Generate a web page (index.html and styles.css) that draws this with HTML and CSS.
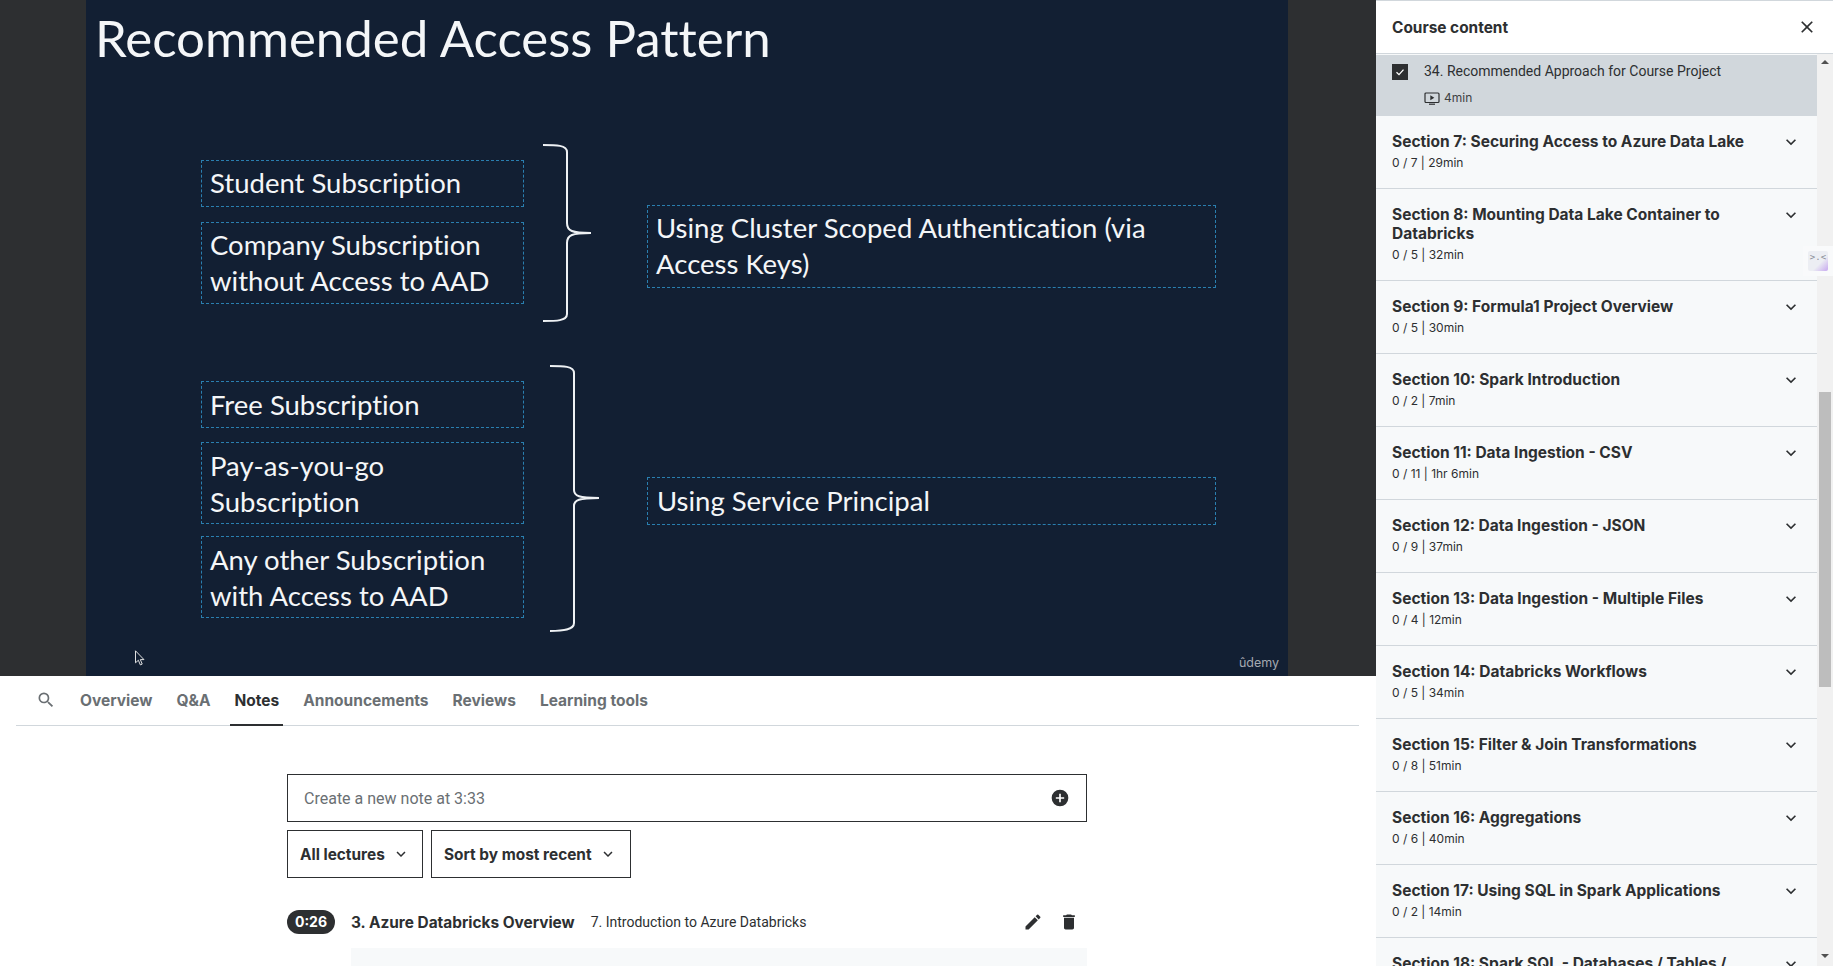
FILE: index.html
```html
<!DOCTYPE html>
<html lang="en">
<head>
  <meta charset="UTF-8" />
  <title>Course player</title>
  <link rel="stylesheet" href="styles.css">
</head>
<body>

<div class="app">
  <div class="main">
    <div class="stage">
      <div class="slide">
        <h1 class="slide-title">Recommended Access Pattern</h1>

        <div class="box box-student">Student Subscription</div>
        <div class="box box-company">Company Subscription<br>without Access to AAD</div>
        <div class="box box-free">Free Subscription</div>
        <div class="box box-payg">Pay-as-you-go<br>Subscription</div>
        <div class="box box-other">Any other Subscription<br>with Access to AAD</div>
        <div class="box box-cluster">Using Cluster Scoped Authentication (via<br>Access Keys)</div>
        <div class="box box-principal">Using Service Principal</div>

        <svg class="brace brace-top" width="52" height="180" viewBox="0 0 52 180">
          <path d="M1 2C14 2 25 2 25 9V80C25 88 30 90 49 90C30 90 25 92 25 100V171C25 178 14 178 1 178" />
        </svg>
        <svg class="brace brace-bottom" width="52" height="270" viewBox="0 0 52 270">
          <path d="M1 2C14 2 25 2 25 9V126C25 132 30 134 50 134C30 134 25 136 25 142V259C25 266 14 267 1 267" />
        </svg>

        <span class="watermark">ûdemy</span>
      </div>
      <svg class="cursor" width="11" height="16" viewBox="0 0 12 20">
        <path d="M1 1V16L4.6 12.8L7 18.6L9.4 17.6L7 12H11.6Z" />
      </svg>
    </div>

    <nav class="tabs">
      <span class="tab tab-search">
        <svg width="20" height="20" viewBox="0 0 24 24"><path d="M15.5 14h-.79l-.28-.27A6.47 6.47 0 0 0 16 9.5 6.5 6.5 0 1 0 9.5 16c1.61 0 3.09-.59 4.23-1.57l.27.28v.79l5 4.99L20.49 19l-4.99-5zm-6 0C7.01 14 5 11.99 5 9.5S7.01 5 9.5 5 14 7.01 14 9.5 11.99 14 9.5 14z"/></svg>
      </span>
      <span class="tab">Overview</span>
      <span class="tab">Q&amp;A</span>
      <span class="tab active">Notes</span>
      <span class="tab">Announcements</span>
      <span class="tab">Reviews</span>
      <span class="tab">Learning tools</span>
    </nav>

    <div class="notes">
      <div class="note-input">
        <span>Create a new note at 3:33</span>
        <svg width="20" height="20" viewBox="0 0 24 24"><path d="M12 2a10 10 0 1 0 0 20 10 10 0 0 0 0-20zm5 11h-4v4h-2v-4H7v-2h4V7h2v4h4v2z"/></svg>
      </div>

      <div class="filters">
        <button class="filter filter-lectures">All lectures
          <svg width="18" height="18" viewBox="0 0 24 24"><path d="M7.4 8.6 12 13.2l4.6-4.6L18 10l-6 6-6-6z"/></svg>
        </button>
        <button class="filter filter-sort">Sort by most recent
          <svg width="18" height="18" viewBox="0 0 24 24"><path d="M7.4 8.6 12 13.2l4.6-4.6L18 10l-6 6-6-6z"/></svg>
        </button>
      </div>

      <div class="note-head">
        <span class="pill">0:26</span>
        <span class="note-section">3. Azure Databricks Overview</span>
        <span class="note-lecture">7. Introduction to Azure Databricks</span>
        <span class="note-actions">
          <svg width="20" height="20" viewBox="0 0 24 24"><path d="M3 17.25V21h3.75L17.81 9.94l-3.75-3.75L3 17.25zM20.71 7.04a1 1 0 0 0 0-1.41l-2.34-2.34a1 1 0 0 0-1.41 0l-1.83 1.83 3.75 3.75 1.83-1.83z"/></svg>
          <svg width="20" height="20" viewBox="0 0 24 24"><path d="M6 19c0 1.1.9 2 2 2h8c1.1 0 2-.9 2-2V7H6v12zM19 4h-3.5l-1-1h-5l-1 1H5v2h14V4z"/></svg>
        </span>
      </div>
      <div class="note-body"></div>
    </div>
  </div>

  <aside class="sidebar">
    <header class="side-head">
      <span>Course content</span>
      <svg width="20" height="20" viewBox="0 0 24 24"><path d="M19 6.41 17.59 5 12 10.59 6.41 5 5 6.41 10.59 12 5 17.59 6.41 19 12 13.41 17.59 19 19 17.59 13.41 12z"/></svg>
    </header>

    <div class="side-scroll">
      <div class="side-list">
        <div class="lecture">
          <span class="check">
            <svg width="12" height="12" viewBox="0 0 12 12"><path d="M2.5 6.2 5 8.6 9.5 3.6" /></svg>
          </span>
          <div>
            <div class="lecture-title">34. Recommended Approach for Course Project</div>
            <div class="lecture-meta">
              <svg width="16" height="13" viewBox="0 0 16 13"><rect x="1" y="1" width="14" height="9.5" rx="1" /><path class="play" d="M6.3 3.2 10.3 5.7 6.3 8.2Z" /><path d="M5 12.2H11" /></svg>
              4min
            </div>
          </div>
        </div>

        <div class="section"><div class="section-text"><h3>Section 7: Securing Access to Azure Data Lake</h3><p>0 / 7 | 29min</p></div><svg class="chev" viewBox="0 0 24 24"><path d="M7.4 8.6 12 13.2l4.6-4.6L18 10l-6 6-6-6z"/></svg></div>
        <div class="section"><div class="section-text"><h3>Section 8: Mounting Data Lake Container to Databricks</h3><p>0 / 5 | 32min</p></div><svg class="chev" viewBox="0 0 24 24"><path d="M7.4 8.6 12 13.2l4.6-4.6L18 10l-6 6-6-6z"/></svg></div>
        <div class="section"><div class="section-text"><h3>Section 9: Formula1 Project Overview</h3><p>0 / 5 | 30min</p></div><svg class="chev" viewBox="0 0 24 24"><path d="M7.4 8.6 12 13.2l4.6-4.6L18 10l-6 6-6-6z"/></svg></div>
        <div class="section"><div class="section-text"><h3>Section 10: Spark Introduction</h3><p>0 / 2 | 7min</p></div><svg class="chev" viewBox="0 0 24 24"><path d="M7.4 8.6 12 13.2l4.6-4.6L18 10l-6 6-6-6z"/></svg></div>
        <div class="section"><div class="section-text"><h3>Section 11: Data Ingestion - CSV</h3><p>0 / 11 | 1hr 6min</p></div><svg class="chev" viewBox="0 0 24 24"><path d="M7.4 8.6 12 13.2l4.6-4.6L18 10l-6 6-6-6z"/></svg></div>
        <div class="section"><div class="section-text"><h3>Section 12: Data Ingestion - JSON</h3><p>0 / 9 | 37min</p></div><svg class="chev" viewBox="0 0 24 24"><path d="M7.4 8.6 12 13.2l4.6-4.6L18 10l-6 6-6-6z"/></svg></div>
        <div class="section"><div class="section-text"><h3>Section 13: Data Ingestion - Multiple Files</h3><p>0 / 4 | 12min</p></div><svg class="chev" viewBox="0 0 24 24"><path d="M7.4 8.6 12 13.2l4.6-4.6L18 10l-6 6-6-6z"/></svg></div>
        <div class="section"><div class="section-text"><h3>Section 14: Databricks Workflows</h3><p>0 / 5 | 34min</p></div><svg class="chev" viewBox="0 0 24 24"><path d="M7.4 8.6 12 13.2l4.6-4.6L18 10l-6 6-6-6z"/></svg></div>
        <div class="section"><div class="section-text"><h3>Section 15: Filter &amp; Join Transformations</h3><p>0 / 8 | 51min</p></div><svg class="chev" viewBox="0 0 24 24"><path d="M7.4 8.6 12 13.2l4.6-4.6L18 10l-6 6-6-6z"/></svg></div>
        <div class="section"><div class="section-text"><h3>Section 16: Aggregations</h3><p>0 / 6 | 40min</p></div><svg class="chev" viewBox="0 0 24 24"><path d="M7.4 8.6 12 13.2l4.6-4.6L18 10l-6 6-6-6z"/></svg></div>
        <div class="section"><div class="section-text"><h3>Section 17: Using SQL in Spark Applications</h3><p>0 / 2 | 14min</p></div><svg class="chev" viewBox="0 0 24 24"><path d="M7.4 8.6 12 13.2l4.6-4.6L18 10l-6 6-6-6z"/></svg></div>
        <div class="section"><div class="section-text"><h3>Section 18: Spark SQL - Databases / Tables /</h3></div><svg class="chev" viewBox="0 0 24 24"><path d="M7.4 8.6 12 13.2l4.6-4.6L18 10l-6 6-6-6z"/></svg></div>
      </div>

      <div class="scrollbar">
        <span class="arrow arrow-up"></span>
        <div class="thumb"></div>
        <span class="arrow arrow-down"></span>
      </div>
    </div>

    <div class="widget">
      <div class="widget-face">&gt;.&lt;</div>
    </div>
  </aside>
</div>

</body>
</html>
```

FILE: styles.css
```css
* { box-sizing: border-box; }
html, body { height: 100%; }
body {
  margin: 0;
  overflow: hidden;
  background: #fff;
  color: #2d2f31;
  font-family: Inter, "Liberation Sans", sans-serif;
}
h1, h3, p { margin: 0; }
svg { display: block; fill: currentColor; flex: none; }

.app {
  display: flex;
  height: 966px;
  overflow: hidden;
}
.main {
  width: 1376px;
  flex: none;
  overflow: hidden;
}

/* video area */
.stage {
  position: relative;
  height: 676px;
  background: #2d2f31;
  padding-left: 86px;
}
.slide {
  position: relative;
  width: 1202px;
  height: 676px;
  background: #121f33;
  color: #f4f6f8;
  font-family: Lato, "Open Sans", sans-serif;
  font-variant-ligatures: none;
}
.slide-title {
  position: absolute;
  left: 9px;
  top: 7px;
  font-size: 51px;
  font-weight: 400;
  line-height: 62px;
  white-space: nowrap;
}
.box {
  position: absolute;
  left: 115px;
  width: 323px;
  padding: 4px 8px;
  border: 1px dashed #2a7fb0;
  font-size: 27.5px;
  line-height: 35.5px;
  white-space: nowrap;
}
.box-student { top: 160px; height: 47px; }
.box-company { top: 222px; height: 82px; }
.box-free { top: 381px; height: 47px; padding-top: 5px; }
.box-payg { top: 442px; height: 82px; padding-top: 5px; }
.box-other { top: 536px; height: 82px; padding-top: 5px; }
.box-cluster { left: 561px; top: 205px; width: 569px; height: 83px; }
.box-principal { left: 561px; top: 477px; width: 569px; height: 48px; padding: 5px 9px; }

.brace { position: absolute; }
.brace path { fill: none; stroke: #eef1f4; stroke-width: 2; }
.brace-top { left: 456px; top: 143px; }
.brace-bottom { left: 463px; top: 364px; }

.watermark {
  position: absolute;
  right: 9px;
  bottom: 6px;
  font-family: Inter, sans-serif;
  font-size: 12.5px;
  color: #a4a9b0;
}
.cursor {
  position: absolute;
  left: 134px;
  top: 650px;
}
.cursor path { fill: #121f33; stroke: #e8e8e8; stroke-width: 1.2; }

/* tabs */
.tabs {
  display: flex;
  gap: 24px;
  height: 50px;
  margin: 0 16px;
  width: 1343px;
  padding-left: 20px;
  border-bottom: 1px solid #d1d7dc;
  font-size: 15.5px;
  font-weight: 700;
  color: #6a6f73;
}
.tab {
  position: relative;
  display: flex;
  align-items: center;
  padding-bottom: 1px;
}
.tab-search svg { color: #6a6f73; }
.tab.active { color: #2d2f31; }
.tab.active::after {
  content: "";
  position: absolute;
  left: -4px;
  right: -4px;
  bottom: -1px;
  height: 2px;
  background: #2d2f31;
}

/* notes */
.notes {
  width: 800px;
  margin-left: 287px;
  padding-top: 48px;
}
.note-input {
  display: flex;
  align-items: center;
  justify-content: space-between;
  height: 48px;
  padding: 0 16px;
  border: 1px solid #2d2f31;
  font-family: Roboto, sans-serif;
  font-size: 16px;
  color: #6a6f73;
}
.note-input svg { color: #2d2f31; }
.filters {
  display: flex;
  gap: 8px;
  margin-top: 8px;
}
.filter {
  display: flex;
  align-items: center;
  gap: 7px;
  height: 48px;
  padding: 0 12px;
  border: 1px solid #2d2f31;
  background: #fff;
  color: #2d2f31;
  font: 700 15.4px Inter, sans-serif;
}
.filter-lectures { width: 136px; }
.filter-sort { width: 200px; }
.note-head {
  display: flex;
  align-items: center;
  margin-top: 32px;
  height: 24px;
}
.pill {
  width: 48px;
  height: 24px;
  margin-right: 16px;
  border-radius: 12px;
  background: #2d2f31;
  color: #fff;
  font-size: 14px;
  font-weight: 700;
  line-height: 24px;
  text-align: center;
}
.note-section {
  margin-right: 16px;
  font-size: 15.4px;
  font-weight: 700;
}
.note-lecture {
  font-family: Roboto, sans-serif;
  font-size: 14px;
}
.note-actions {
  display: flex;
  gap: 16px;
  margin-left: auto;
  padding-right: 8px;
}
.note-body {
  height: 60px;
  margin: 14px 0 0 64px;
  background: #f7f9fa;
}

/* sidebar */
.sidebar {
  position: relative;
  width: 457px;
  flex: none;
  border-top: 1px solid #d1d7dc;
}
.side-head {
  display: flex;
  align-items: center;
  justify-content: space-between;
  height: 53px;
  padding: 0 16px;
  border-bottom: 1px solid #d1d7dc;
  font-size: 15.4px;
  font-weight: 700;
}
.side-scroll {
  display: flex;
  height: 912px;
}
.side-list {
  width: 441px;
  flex: none;
  overflow: hidden;
  background: #f7f9fa;
}
.lecture {
  display: flex;
  gap: 16px;
  height: 61px;
  margin-top: 1px;
  padding: 9px 16px 0;
  background: #d1d7dc;
}
.check {
  display: flex;
  align-items: center;
  justify-content: center;
  width: 16px;
  height: 16px;
  background: #2d2f31;
}
.check svg path { fill: none; stroke: #fff; stroke-width: 1.3; }
.lecture-title {
  font-family: Roboto, sans-serif;
  font-size: 14px;
  line-height: 17px;
  margin-top: -1px;
}
.lecture-meta {
  display: flex;
  align-items: center;
  gap: 4px;
  margin-top: 10px;
  font-size: 12px;
  line-height: 16px;
  color: #3e4143;
}
.lecture-meta svg { fill: none; stroke: #2d2f31; stroke-width: 1.2; }
.lecture-meta .play { fill: #2d2f31; stroke: none; }
.section {
  display: flex;
  justify-content: space-between;
  padding: 16px 16px 16px;
  border-bottom: 1px solid #d1d7dc;
}
.section-text { width: 370px; }
.section h3 {
  font-size: 15.5px;
  font-weight: 700;
  line-height: 19px;
}
.section p {
  margin-top: 3px;
  font-size: 12px;
  line-height: 18px;
  color: #2d2f31;
}
.chev { width: 20px; height: 20px; }
.scrollbar {
  display: flex;
  flex-direction: column;
  width: 16px;
  flex: none;
  background: #f1f1f1;
}
.arrow {
  width: 0;
  height: 0;
  margin: 6px auto;
  border-left: 4px solid transparent;
  border-right: 4px solid transparent;
}
.arrow-up { border-bottom: 4px solid #505050; }
.arrow-down { border-top: 4px solid #505050; margin-top: auto; margin-bottom: 8px; }
.thumb {
  width: 12px;
  height: 295px;
  margin: 322px 0 0 2px;
  background: #bdbdbd;
}
.widget {
  position: absolute;
  right: 0;
  top: 245px;
  width: 30px;
  height: 30px;
  padding: 5px;
  background: #f9fafb;
}
.widget-face {
  width: 20px;
  height: 20px;
  border-radius: 2px;
  background: linear-gradient(135deg, #eceef3 60%, #c7a8ef);
  color: #8a8f98;
  font: 9px/12px "DejaVu Sans Mono", monospace;
  text-align: center;
  overflow: hidden;
}
```
